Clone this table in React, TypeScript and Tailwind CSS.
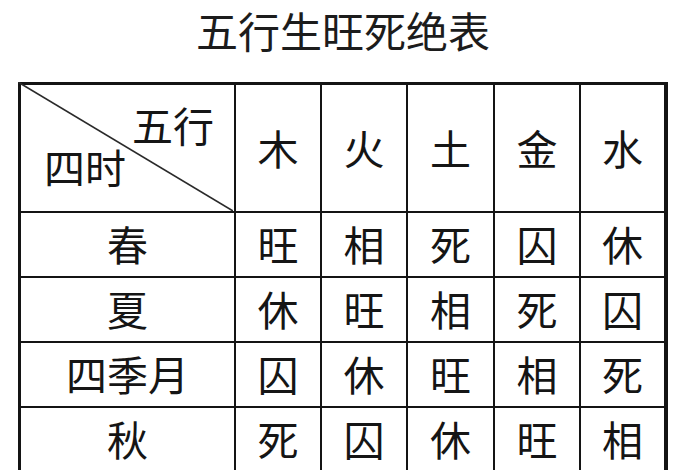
import { Fragment } from 'react'

const PHASES = ['木', '火', '土', '金', '水']

const ROWS = [
  { season: '春', cells: ['旺', '相', '死', '囚', '休'] },
  { season: '夏', cells: ['休', '旺', '相', '死', '囚'] },
  { season: '四季月', cells: ['囚', '休', '旺', '相', '死'] },
  { season: '秋', cells: ['死', '囚', '休', '旺', '相'] },
]

const font = { fontFamily: '"Noto Sans CJK SC", "Noto Sans", sans-serif' }

export default function App() {
  return (
    <div className="h-[470px] w-[700px] overflow-hidden bg-white text-[#151515]" style={font}>
      <div className="ml-[18px] w-[650px]">
        {/* Title */}
        <h1 className="pt-[9px] text-center text-[42px] font-normal leading-none text-[#1c1c1c]">
          五行生旺死绝表
        </h1>

        {/* Table */}
        <div className="mt-[31px] grid grid-cols-[213px_84px_84px_85px_84px_83px] grid-rows-[126px_63px_63px_63px_63px] gap-[2px] bg-[#141414] p-[3px] text-[41px] leading-none">
          {/* Corner cell with diagonal */}
          <div className="relative flex flex-col bg-white pt-[19px]">
            <svg className="absolute -left-[3px] -top-[3px] h-[129px] w-[215px]" viewBox="0 0 215 129" preserveAspectRatio="none">
              <line x1="0" y1="0" x2="215" y2="129" stroke="#2a2a2a" strokeWidth="1.6" />
            </svg>
            <span className="relative self-end pr-[20px]">五行</span>
            <span className="relative mt-[1px] pl-[23px]">四时</span>
          </div>
          {PHASES.map((p) => (
            <div key={p} className="flex items-center justify-center bg-white pb-[2px]">
              {p}
            </div>
          ))}

          {ROWS.map((row) => (
            <Fragment key={row.season}>
              <div className="flex items-center justify-center bg-white pb-[3px]">
                {row.season}
              </div>
              {row.cells.map((c, i) => (
                <div key={i} className="flex items-center justify-center bg-white pb-[3px]">
                  {c}
                </div>
              ))}
            </Fragment>
          ))}
        </div>
      </div>
    </div>
  )
}
